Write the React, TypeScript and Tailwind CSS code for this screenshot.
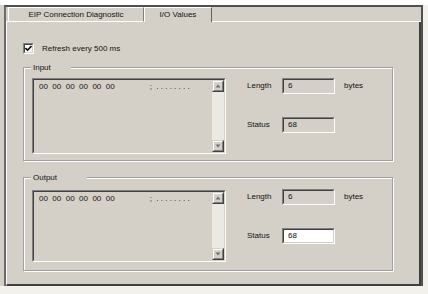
import React from "react";

const panel = "bg-[#d4d0c8]";

function Sunken({ className = "", inner = "", children }: { className?: string; inner?: string; children?: React.ReactNode }) {
  return (
    <div className={`border border-t-[#808080] border-l-[#808080] border-b-white border-r-white ${className}`}>
      <div className={`h-full w-full border border-t-[#404040] border-l-[#404040] border-b-[#d4d0c8] border-r-[#d4d0c8] ${inner}`}>
        {children}
      </div>
    </div>
  );
}

function ScrollButton({ up }: { up?: boolean }) {
  return (
    <div className="h-[12px] w-[12px] border border-t-[#d4d0c8] border-l-[#d4d0c8] border-b-[#404040] border-r-[#404040]">
      <div className={`flex h-full w-full items-center justify-center border border-t-white border-l-white border-b-[#808080] border-r-[#808080] ${panel}`}>
        <svg width="6" height="4" viewBox="0 0 6 4">
          {up ? <path d="M3 0.5 L5.5 3.5 L0.5 3.5 Z" fill="#707070" /> : <path d="M0.5 0.5 L5.5 0.5 L3 3.5 Z" fill="#707070" />}
        </svg>
      </div>
    </div>
  );
}

function HexView({ h, top }: { h: string; top: string }) {
  return (
    <Sunken className={`w-[194px] ${h} ${top}`} inner={`flex ${panel}`}>
      <div className="flex flex-1 whitespace-pre pl-[5px] pt-[1px] leading-[11px]">
        <span>00  00  00  00  00  00</span>
        <span className="ml-[35px]">;  . . . . . . . .</span>
      </div>
      <div className="flex w-[12px] flex-col bg-[#ebe9e4]">
        <ScrollButton up />
        <div className="flex-1" />
        <ScrollButton />
      </div>
    </Sunken>
  );
}

function Field({ value, white }: { value: string; white?: boolean }) {
  return (
    <Sunken className="h-[16px] w-[53px]" inner={`flex items-center pl-[4px] ${white ? "bg-white" : panel}`}>
      {value}
    </Sunken>
  );
}

function GroupBox({
  title,
  labelW,
  rowTop,
  taTop,
  taH,
  statusWhite,
}: {
  title: string;
  labelW: string;
  rowTop: string;
  taTop: string;
  taH: string;
  statusWhite?: boolean;
}) {
  return (
    <div className="h-[94px] w-[370px] border border-[#a0a0a0] shadow-[inset_1px_1px_0_#fff,1px_1px_0_#fff]">
      <div className={`-mt-[6px] ml-[7px] h-[11px] ${labelW} ${panel} pl-[2px] leading-[11px]`}>{title}</div>
      <div className={`ml-[8px] flex items-start ${rowTop}`}>
        <HexView h={taH} top={taTop} />
        <div className="ml-[21px] flex flex-col gap-[23px]">
          <div className="flex items-center">
            <span className="w-[35px]">Length</span>
            <Field value="6" />
            <span className="ml-[9px]">bytes</span>
          </div>
          <div className="flex items-center">
            <span className="w-[35px]">Status</span>
            <Field value="68" white={statusWhite} />
          </div>
        </div>
      </div>
    </div>
  );
}

export default function App() {
  return (
    <div className="flex h-[294px] w-[428px] flex-col bg-[#d4d0c8] font-['Liberation_Sans',Arial,sans-serif] text-[8px] text-[#111]">
      <div className="h-[5px] bg-white" />
      <div className="flex h-[281px]">
        <div className="w-[4px]" />
        <div className="flex w-[419px] flex-col border-x-2 border-t-2 border-l-[#6a6a6a] border-r-[#505050] border-t-[#505050]">
          <div className="flex h-[15px]">
            <div className="w-[2px] border-b border-white" />
            <div className="flex w-[136px] items-center justify-center border-b border-l border-t border-r border-white border-r-[#808080]">
              EIP Connection Diagnostic
            </div>
            <div className="flex w-[68px] items-center justify-center border-l border-t border-r border-white border-r-[#606060]">
              I/O Values
            </div>
            <div className="flex-1 border-b border-white" />
          </div>
          <div className="flex flex-1 flex-col border-b-2 border-l border-r-2 border-l-white border-r-[#404040] border-b-[#404040]">
            <div className="ml-[16px] mt-[21px] flex h-[11px] items-center">
              <Sunken className="h-[11px] w-[11px]" inner="flex items-center justify-center bg-white">
                <svg width="7" height="7" viewBox="0 0 7 7">
                  <path d="M0.5 3 L2.5 5.2 L6.5 1" stroke="#000" strokeWidth="1.6" fill="none" />
                </svg>
              </Sunken>
              <span className="ml-[8px]">Refresh every 500 ms</span>
            </div>
            <div className="ml-[16px] mt-[13px]">
              <GroupBox title="Input" labelW="w-[40px]" rowTop="mt-[5px]" taTop="mt-0" taH="h-[76px]" />
            </div>
            <div className="ml-[16px] mt-[16px]">
              <GroupBox title="Output" labelW="w-[56px]" rowTop="mt-[6px]" taTop="mt-[1px]" taH="h-[72px]" statusWhite />
            </div>
          </div>
        </div>
        <div className="w-[5px] bg-[#f2f1ec]" />
      </div>
      <div className="h-[8px] bg-[#f2f1ec]" />
    </div>
  );
}
